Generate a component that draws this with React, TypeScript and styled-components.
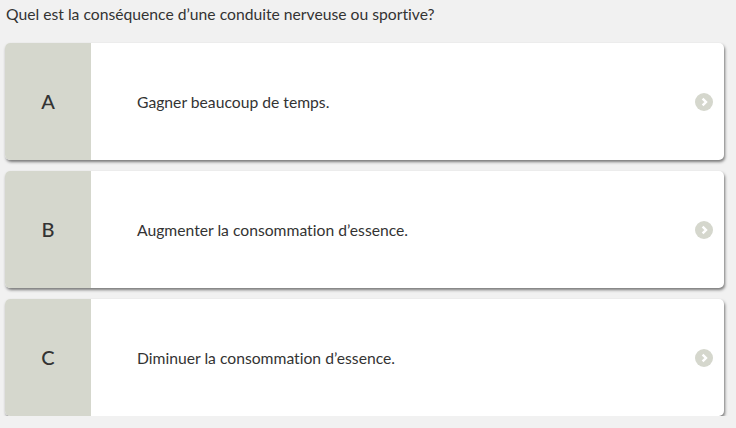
import React from "react";
import styled, { createGlobalStyle } from "styled-components";

const Global = createGlobalStyle`
  html, body { margin: 0; padding: 0; background: #f1f1f1; }
  body {
    font-family: Lato, "Open Sans", sans-serif;
    color: #333;
    font-variant-ligatures: none;
  }
`;

const Page = styled.div`
  padding: 4px 12px 0 5px;
  display: flex;
  flex-direction: column;
`;

const Question = styled.div`
  font-size: 15.7px;
  line-height: 20px;
  color: #333;
  padding-left: 1px;
  margin-bottom: 19px;
`;

const List = styled.div`
  display: flex;
  flex-direction: column;
  gap: 11px;
`;

const Card = styled.div`
  display: flex;
  height: 117px;
  background: #fff;
  border-radius: 5px;
  overflow: hidden;
  box-shadow: 1px 2px 3px rgba(0, 0, 0, 0.5);
`;

const Letter = styled.div`
  width: 86px;
  flex: none;
  background: #d5d7cd;
  display: flex;
  align-items: center;
  justify-content: center;
  font-size: 20px;
  font-weight: 500;
  color: #333;
  padding-bottom: 2px;
  box-sizing: border-box;
`;

const Text = styled.div`
  flex: 1;
  display: flex;
  align-items: center;
  padding-left: 46px;
  font-size: 15.7px;
  color: #333;
`;

const Arrow = styled.div`
  width: 18px;
  height: 18px;
  border-radius: 50%;
  background: #d5d7cd;
  align-self: center;
  margin-right: 11px;
  display: flex;
  align-items: center;
  justify-content: center;
`;

const answers = [
  { l: "A", t: "Gagner beaucoup de temps." },
  { l: "B", t: "Augmenter la consommation d’essence." },
  { l: "C", t: "Diminuer la consommation d’essence." },
];

export default function App() {
  return (
    <>
      <Global />
      <Page>
        <Question>Quel est la conséquence d’une conduite nerveuse ou sportive?</Question>
        <List>
          {answers.map((a) => (
            <Card key={a.l}>
              <Letter>{a.l}</Letter>
              <Text>{a.t}</Text>
              <Arrow>
                <svg width="10" height="10" viewBox="0 0 10 10">
                  <path d="M3.6 1.6 L7 5 L3.6 8.4" fill="none" stroke="#fff" strokeWidth="2.4" />
                </svg>
              </Arrow>
            </Card>
          ))}
        </List>
      </Page>
    </>
  );
}
